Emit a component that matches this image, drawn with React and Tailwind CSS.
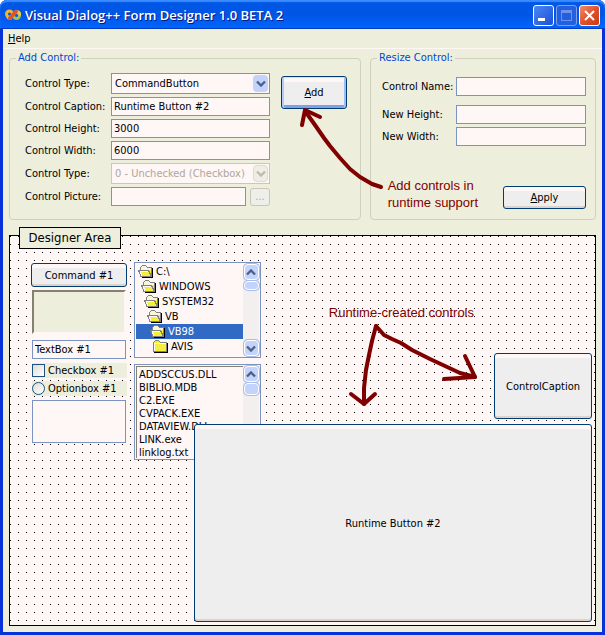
import { useState } from "react";

const DIRECTORIES = [
    { name: "C:\\", open: true, indent: "pl-[2px]" },
    { name: "WINDOWS", open: true, indent: "pl-[5px]" },
    { name: "SYSTEM32", open: true, indent: "pl-2" },
    { name: "VB", open: true, indent: "pl-[11px]" },
    { name: "VB98", open: true, indent: "pl-[14px]" },
    { name: "AVIS", open: false, indent: "pl-[17px]" },
];

const FILES = ["ADDSCCUS.DLL", "BIBLIO.MDB", "C2.EXE", "CVPACK.EXE", "DATAVIEW.DLL", "LINK.exe", "linklog.txt"];

const fieldStyle = "h-[19px] bg-[#fff6f6] border border-[#7b93c1] px-[2px] text-black outline-none rounded-none";
const buttonBase = "border border-[#003c74] rounded-[3px] bg-[#eeeeee] text-black";
const buttonStyle = `${buttonBase} shadow-[inset_0_4px_0_#fff6f6,inset_0_-2px_0_#ddd3cc]`;
const defaultButtonStyle = `${buttonBase} shadow-[inset_0_1px_0_#cee0ff,inset_2px_0_0_#b4cbf5,inset_-2px_0_0_#a0bcf0,inset_0_-3px_0_#7f9fe6,inset_0_5px_0_#fff6f6]`;
const scrollPartStyle = "rounded-sm bg-[#c4d3fb] border border-white shadow-[0_0_0_1px_#a9bde8]";

const AppIcon = () => (
    <svg className="w-4 h-4 shrink-0" viewBox="0 0 16 16" fill="none" aria-hidden="true">
        <circle cx="4.5" cy="7" r="3" stroke="#efb52e" strokeWidth="3" />
        <circle cx="11.5" cy="8.5" r="3" stroke="#a9c04c" strokeWidth="3" />
        <path d="M10.500 4.500a3.500 3.500 0 0 1 4.500 4" stroke="#f4c94a" strokeWidth="2.600" />
        <path d="M2 10a3.500 3.500 0 0 0 4.500 1.500" stroke="#9cc8e4" strokeWidth="2" />
        <path d="M4.800 11.200L11 4.500" stroke="#e2502c" strokeWidth="3.800" strokeLinecap="round" />
    </svg>
);

const Chevron = ({ up, color = "#4d6185" }) => (
    <svg className="w-[10px] h-[7px]" viewBox="0 0 10 7" fill="none" aria-hidden="true">
        <path d={up ? "M1 5.500L5 1.500L9 5.500" : "M1 1.500L5 5.500L9 1.500"} stroke={color} strokeWidth="2.400" />
    </svg>
);

const FolderIcon = ({ open }) => (
    <svg className="w-4 h-[13px] shrink-0" viewBox="0 0 16 13" shapeRendering="crispEdges" aria-hidden="true">
        {open ? (
            <>
                <path d="M2.500 11V2.500L4.500 0.500H7.500L9.500 2.500H13.500V11Z" fill="#fbf6d8" stroke="#808080" />
                <path d="M5 5H13V10H5Z" fill="#f4ee3c" />
                <path d="M0.500 5.500H10.500L13.500 11.500H3.500Z" fill="#f4ee3c" stroke="#808080" />
                <path d="M1.500 6.500H10M2.500 7.500L4 10.500" stroke="#fff6f6" />
                <path d="M4 12.500H15M14.500 3V12.500" stroke="#000" />
            </>
        ) : (
            <>
                <path d="M0.500 11.500V2.500L2.500 0.500H5.500L7.500 2.500H13.500V11.500Z" fill="#f4ee3c" stroke="#808080" />
                <path d="M1.500 3.500H13M1.500 3V11" stroke="#fff6f6" />
                <path d="M1 12.500H15M14.500 3V12.500" stroke="#000" />
            </>
        )}
    </svg>
);

// XP-style scrollbar
const ScrollBar = ({ thumb, down }) => (
    <div className="w-4 shrink-0 flex flex-col items-center bg-[#f3efee]">
        <button type="button" aria-label="Scroll up" className={`${scrollPartStyle} w-[15px] h-4 shrink-0 flex items-center justify-center`}>
            <Chevron up />
        </button>
        <div className={`${scrollPartStyle} w-[15px] mt-px ${thumb}`}></div>
        {down && (
            <button type="button" aria-label="Scroll down" className={`${scrollPartStyle} w-[15px] h-4 mt-auto flex items-center justify-center`}>
                <Chevron />
            </button>
        )}
    </div>
);

const GroupBox = ({ title, className, children }) => (
    <fieldset className={`border border-[#d0d0bf] rounded-[4px] ${className}`}>
        <legend className="ml-[6px] px-[2px] h-4 leading-4 text-[#0046d5]">{title}</legend>
        {children}
    </fieldset>
);

const Combo = ({ id, value, options, onChange, disabled }) => (
    <div className={`relative flex-1 h-[21px] border ${disabled ? "border-[#c9c7ba]" : "border-[#7b93c1]"} bg-[#fff6f6]`}>
        <select
            id={id}
            value={value}
            onChange={onChange}
            disabled={disabled}
            className="appearance-none block w-full h-[19px] pl-[3px] pr-4 bg-transparent text-black disabled:text-[#aca899] disabled:opacity-100 outline-none"
        >
            {options.map((option) => (
                <option key={option}>{option}</option>
            ))}
        </select>
        <span className={`absolute right-px top-px w-[15px] h-[17px] flex items-center justify-center rounded-sm pointer-events-none ${disabled ? "bg-[#eeeee4] border border-[#dcdccb]" : "bg-[#c4d3fb]"}`}>
            <Chevron color={disabled ? "#bdbbae" : "#4d6185"} />
        </span>
    </div>
);

const TextRow = ({ id, label, labelWidth, value, onChange }) => (
    <div className="flex items-center">
        <label htmlFor={id} className={`${labelWidth} shrink-0 whitespace-nowrap`}>{label}</label>
        <input id={id} type="text" value={value} onChange={onChange} className={`${fieldStyle} flex-1 min-w-0`} />
    </div>
);

const TitleBar = () => (
    <header className="h-[29px] flex items-center px-[5px] bg-linear-to-b from-[#0058e6] via-[#0055e5] to-[#0066ff] shadow-[inset_0_2px_1px_#3a8bff,inset_0_-1px_0_#003bc0] rounded-t-[7px]">
        <AppIcon />
        <h1 className="ml-1 pt-px flex-1 font-['Open_Sans',sans-serif] text-[13px] leading-5 font-semibold text-white whitespace-nowrap [text-shadow:1px_1px_0_#0a1883]">
            Visual Dialog++ Form Designer 1.0 BETA 2
        </h1>
        <div className="flex gap-[2px] pt-[2px]">
            <button type="button" aria-label="Minimize" className="size-[21px] rounded-[3px] border border-white bg-linear-to-br from-[#4d86f0] to-[#1b50d8] flex items-end pl-1 pb-1">
                <span className="w-[7px] h-[3px] bg-white"></span>
            </button>
            <button type="button" aria-label="Maximize" disabled className="size-[21px] rounded-[3px] border border-[#7c9fee] bg-[#245fdf] flex items-center justify-center">
                <span className="w-[11px] h-[11px] border border-t-[3px] border-[#6d92ea]"></span>
            </button>
            <button type="button" aria-label="Close" className="size-[21px] rounded-[3px] border border-white bg-linear-to-br from-[#ee8a6b] via-[#e0522c] to-[#c83a12] flex items-center justify-center">
                <svg className="w-[13px] h-[13px]" viewBox="0 0 13 13" aria-hidden="true">
                    <path d="M2 2L11 11M11 2L2 11" stroke="#fff" strokeWidth="2" />
                </svg>
            </button>
        </div>
    </header>
);

const App = () => {
    const [form, setForm] = useState({
        type: "CommandButton",
        caption: "Runtime Button #2",
        height: "3000",
        width: "6000",
        picture: "",
        name: "",
        newHeight: "",
        newWidth: "",
        text: "TextBox #1",
    });
    const update = (key) => (e) => setForm({ ...form, [key]: e.target.value });

    return (
        <div className="min-h-screen flex flex-col bg-white text-[11px] leading-[15px] text-black font-['DejaVu_Sans_Condensed','Noto_Sans',sans-serif]">
            <div className="flex-1 flex flex-col bg-[#0831d9] rounded-t-[7px]">
                <TitleBar />
                <div className="flex-1 flex flex-col mx-[3px] mb-[3px] bg-[#eeeedd]">
                    <nav className="h-5 pl-[5px] flex items-center border-b border-[#fff6f6]">
                        <button type="button"><u>H</u>elp</button>
                    </nav>

                    <main className="flex-1 flex flex-col px-[6px] pt-px pb-[6px]">
                        <div className="relative flex gap-[9px]">
                            <GroupBox title="Add Control:" className="flex-1 min-w-0">
                                <div className="flex pl-[15px] pr-[13px] pt-[7px] pb-[13px]">
                                    <div className="w-[245px] flex flex-col gap-[3px]">
                                        <div className="flex items-center">
                                            <label htmlFor="type" className="w-[86px] shrink-0">Control Type:</label>
                                            <Combo id="type" value={form.type} onChange={update("type")} options={["CommandButton", "TextBox", "CheckBox"]} />
                                        </div>
                                        <TextRow id="caption" label="Control Caption:" labelWidth="w-[86px]" value={form.caption} onChange={update("caption")} />
                                        <TextRow id="height" label="Control Height:" labelWidth="w-[86px]" value={form.height} onChange={update("height")} />
                                        <TextRow id="width" label="Control Width:" labelWidth="w-[86px]" value={form.width} onChange={update("width")} />
                                        <div className="flex items-center">
                                            <label htmlFor="state" className="w-[86px] shrink-0">Control Type:</label>
                                            <Combo id="state" value="0 - Unchecked (Checkbox)" options={["0 - Unchecked (Checkbox)"]} disabled />
                                        </div>
                                        <div className="flex items-center gap-1">
                                            <div className="flex-1">
                                                <TextRow id="picture" label="Control Picture:" labelWidth="w-[86px]" value={form.picture} onChange={update("picture")} />
                                            </div>
                                            <button type="button" disabled aria-label="Browse" className="w-5 h-[18px] rounded-[3px] border border-[#c9c7ba] bg-[#eeeeea] text-[#aca899] leading-3">...</button>
                                        </div>
                                    </div>
                                    <button type="button" className={`${defaultButtonStyle} ml-auto mt-[3px] w-[66px] h-[33px]`}><u>A</u>dd</button>
                                </div>
                            </GroupBox>

                            <GroupBox title="Resize Control:" className="w-[225px] shrink-0">
                                <div className="h-full flex flex-col gap-[3px] pl-[11px] pr-[9px] pt-[11px] pb-[10px]">
                                    <TextRow id="name" label="Control Name:" labelWidth="w-[74px]" value={form.name} onChange={update("name")} />
                                    <div className="h-[3px]"></div>
                                    <TextRow id="new-height" label="New Height:" labelWidth="w-[74px]" value={form.newHeight} onChange={update("newHeight")} />
                                    <TextRow id="new-width" label="New Width:" labelWidth="w-[74px]" value={form.newWidth} onChange={update("newWidth")} />
                                    <button type="button" className={`${buttonStyle} mt-auto self-end w-[83px] h-[23px]`}><u>A</u>pply</button>
                                </div>
                            </GroupBox>

                            {/* Note pointing at the Add button */}
                            <div className="absolute right-[118px] top-[127px] text-[13px] leading-[17px] text-[#800000] font-['Liberation_Sans',sans-serif] pointer-events-none">
                                Add controls in<br />runtime support
                            </div>
                            <svg className="absolute right-[206px] top-14 w-[90px] h-[86px] pointer-events-none" viewBox="300 106 90 86" fill="none" stroke="#800000" strokeWidth="4" strokeLinecap="round" strokeLinejoin="round" aria-hidden="true">
                                <path d="M381 187L372 184L360 177L350 169L340 158L330 146L324 138L315 125L305 111" />
                                <path d="M302 125L305 110L320 117" />
                            </svg>
                        </div>

                        <section className="relative flex-1 mt-[15px] border border-black bg-[#fff6f6] bg-[conic-gradient(at_1px_1px,transparent_75%,#000_0)] bg-[length:8px_8px]">
                            <h2 className="absolute left-[9px] -top-[9px] w-[102px] h-[22px] border border-black bg-[#eeeedd] text-[13px] leading-5 text-center">
                                Designer Area
                            </h2>

                            <div className="flex items-start gap-[7px] pl-[21px] pt-[26px] pb-[165px]">
                                <div className="w-24 pt-px flex flex-col">
                                    <button type="button" className={`${buttonStyle} h-6`}>Command #1</button>
                                    <div className="mt-[3px] mx-px h-[44px] bg-[#eeeedd] border-2 border-t-[#85806f] border-l-[#85806f] border-r-[#fff6f6] border-b-[#fff6f6]"></div>
                                    <input type="text" aria-label="TextBox" value={form.text} onChange={update("text")} className={`${fieldStyle} mt-[6px] mx-px`} />
                                    <label className="mt-1 ml-px h-[15px] flex items-center gap-[3px] bg-[#eeeedd]">
                                        <input type="checkbox" className="appearance-none size-[13px] border border-[#1c5180] bg-linear-to-br from-[#dcdcd7] to-white checked:bg-[#21a121]" />
                                        Checkbox #1
                                    </label>
                                    <label className="mt-[3px] ml-px h-[15px] flex items-center gap-[3px] bg-[#eeeedd]">
                                        <input type="radio" className="appearance-none size-[13px] rounded-full border border-[#1c5180] bg-linear-to-br from-[#dcdcd7] to-white checked:bg-[#21a121]" />
                                        Optionbox #1
                                    </label>
                                    <div className="mt-1 mx-px h-[43px] border border-[#7b93c1] bg-[#fff6f6]"></div>
                                </div>

                                <div className="w-[127px] flex flex-col gap-[6px]">
                                    <div className="h-24 flex overflow-hidden border border-[#7b93c1] bg-[#fff6f6] p-px">
                                        <ul className="flex-1">
                                            {DIRECTORIES.map((dir) => (
                                                <li key={dir.name} className={`h-[15px] flex items-center gap-[2px] ${dir.indent} ${dir.name === "VB98" ? "bg-[#316ac5] text-white" : ""}`}>
                                                    <FolderIcon open={dir.open} />
                                                    {dir.name}
                                                </li>
                                            ))}
                                        </ul>
                                        <ScrollBar thumb="h-[9px]" down />
                                    </div>
                                    <div className="h-24 flex overflow-hidden border border-[#7b93c1] bg-[#fff6f6] p-px">
                                        <ul className="flex-1 pl-[2px] pt-px border-t border-l border-[#85806f] leading-[13px]">
                                            {FILES.map((file) => (
                                                <li key={file}>{file}</li>
                                            ))}
                                        </ul>
                                        <ScrollBar thumb="h-3" />
                                    </div>
                                </div>
                            </div>

                            {/* Controls created at runtime sit freely on the canvas */}
                            <button type="button" className={`${buttonStyle} absolute right-[3px] bottom-[206px] w-[98px] h-[66px]`}>ControlCaption</button>
                            <button type="button" className={`${buttonStyle} absolute right-[3px] bottom-[3px] w-[398px] h-[198px]`}>Runtime Button #2</button>

                            <div className="absolute right-[121px] top-[68px] text-[13px] leading-[17px] text-[#800000] font-['Liberation_Sans',sans-serif] whitespace-nowrap">
                                Runtime-created controls
                            </div>
                            <svg className="absolute right-[115px] top-[84px] w-[134px] h-[90px] pointer-events-none" viewBox="346 320 134 90" fill="none" stroke="#800000" strokeWidth="4" strokeLinecap="round" strokeLinejoin="round" aria-hidden="true">
                                <path d="M376 326L372 341L369 355L366 370L364 388L364 404" />
                                <path d="M351 394L364 404L375 394" />
                                <path d="M376 326L384 335L392 339L401 343L412 350L430 359L445 366L460 373L475 377" />
                                <path d="M465 356L475 377L444 379" />
                            </svg>
                        </section>
                    </main>
                </div>
            </div>
        </div>
    );
};

export default App;
